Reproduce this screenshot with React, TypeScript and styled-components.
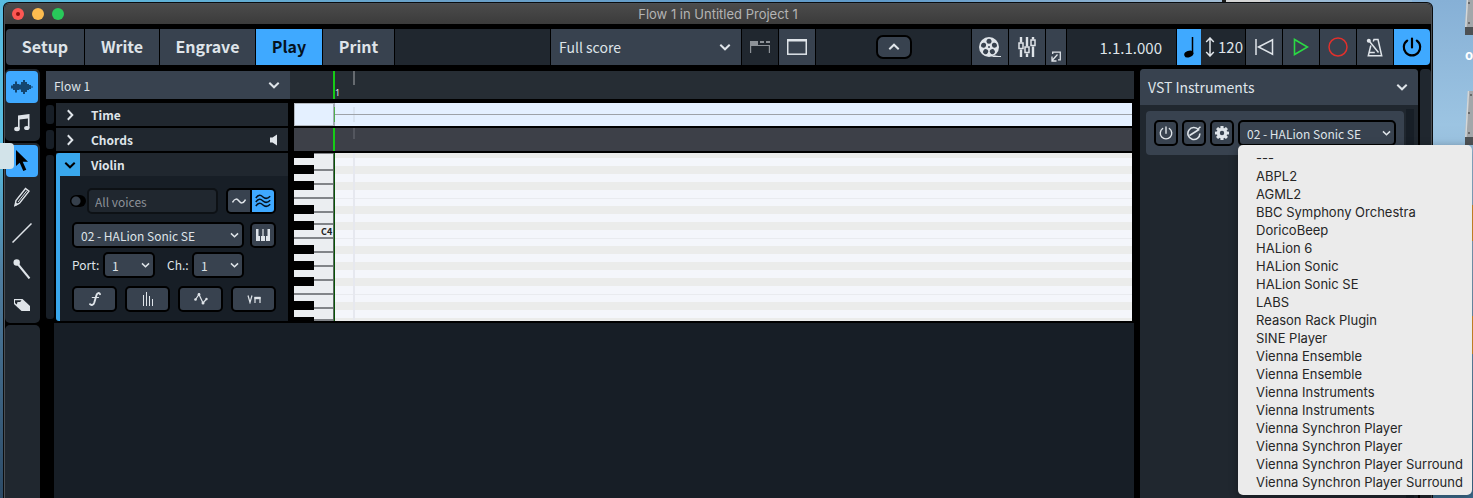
import React from "react";
import styled, { createGlobalStyle, css } from "styled-components";

const c = {
  panel: "#20272f",
  raised: "#38424f",
  deep: "#171e26",
  ruler: "#262d34",
  blue: "#3fa9ff",
  accent: "#39a7ec",
  text: "#dfe4e9",
  muted: "#8c9198",
};
const ui = `"Noto Sans CJK SC", "Noto Sans", sans-serif`;
const system = `Inter, "Liberation Sans", sans-serif`;

const GlobalStyle = createGlobalStyle`
  *, *::before, *::after { box-sizing: border-box; }
  body { margin: 0; background: #5c8fb4; font-family: ${ui}; color: ${c.text}; }
  button, input, select { font-family: inherit; color: inherit; margin: 0; }
  button { cursor: pointer; padding: 0; border: 0; }
  svg { display: block; flex: none; }
`;

const Desktop = styled.div`
  position: relative;
  display: flex;
  flex-direction: column;
  min-height: 100vh;
  padding: 3px 41px 0 4px;
  overflow: hidden;
  background:
    linear-gradient(180deg, transparent 30%, #4f7d9f 55%, #2c4a66 100%) left / 50% 100% no-repeat,
    linear-gradient(90deg, #58bce0 0, #6aa0c8 30%, #5f9aca 60%, #a3bcd2 84%, #8db6d8 100%);
`;

const DesktopItems = styled.svg`
  position: absolute;
  top: 0;
  right: 0;
`;
const DesktopCard = styled.div`
  position: absolute;
  top: 143px;
  left: 0;
  width: 14px;
  height: 26px;
  border-radius: 0 4px 4px 0;
  background: #d2e3e9;
`;

const Window = styled.div`
  position: relative;
  flex: 1;
  display: flex;
  flex-direction: column;
  background: #000;
  border: 1px solid #4b4f54;
  border-bottom: 0;
  border-radius: 5px 5px 0 0;
  box-shadow: 0 0 0 1px #0a0c0e;
`;

const TitleBar = styled.header`
  display: flex;
  align-items: center;
  height: 20px;
  padding: 0 7px;
  border-radius: 4px 4px 0 0;
  background: linear-gradient(#4b4b4b, #3b3b3b);
`;
const Light = styled.button<{ $color: string }>`
  display: grid;
  place-items: center;
  width: 12px;
  height: 12px;
  margin-right: 8px;
  border-radius: 50%;
  background: ${(p) => p.$color};
  &[data-edited]::after {
    content: "";
    width: 4px;
    height: 4px;
    border-radius: 50%;
    background: #8e0f0c;
  }
`;
const Title = styled.h1`
  flex: 1;
  margin: 0 60px 0 0;
  font: 400 13px/20px ${system};
  text-align: center;
  color: #b4b4b4;
`;

const Toolbar = styled.nav`
  display: flex;
  gap: 1px;
  height: 36px;
  margin: 5px 1px 4px 1px;
  border-radius: 4px;
  overflow: hidden;
`;
const Tab = styled.button<{ $w: number; $active?: boolean }>`
  width: ${(p) => p.$w}px;
  font-size: 16px;
  line-height: 34px;
  padding-bottom: 2px;
  font-weight: 700;
  background: ${(p) => (p.$active ? c.blue : c.raised)};
  color: ${(p) => (p.$active ? "#05121f" : c.text)};
`;
const Filler = styled.div`
  flex: 1;
  display: grid;
  place-items: center;
  background: ${c.panel};
`;
const ToolButton = styled.button<{ $w?: number; $tone?: "dark" | "blue" }>`
  display: grid;
  place-items: center;
  width: ${(p) => p.$w ?? 36}px;
  background: ${(p) => (p.$tone === "dark" ? c.panel : p.$tone === "blue" ? c.blue : c.raised)};
  color: ${(p) => (p.$tone === "blue" ? "#000" : c.text)};
`;
const HideButton = styled.button`
  display: grid;
  place-items: center;
  width: 36px;
  height: 24px;
  border: 2px solid #000;
  border-radius: 7px;
  background: ${c.raised};
`;
const Position = styled.output`
  width: 109px;
  padding-right: 14px;
  background: ${c.panel};
  font-size: 15px;
  line-height: 38px;
  text-align: right;
`;
const TempoGroup = styled.div`
  display: flex;
`;
const Tempo = styled.output`
  display: flex;
  align-items: center;
  gap: 3px;
  width: 44px;
  padding-left: 4px;
  background: ${c.panel};
  font-size: 15px;
  line-height: 36px;
`;

const SelectWrap = styled.div<{ $w?: number; $kind?: "bar" | "flow" | "small" }>`
  position: relative;
  display: flex;
  width: ${(p) => (p.$w ? `${p.$w}px` : "auto")};
  flex: ${(p) => (p.$w ? "none" : "1")};
  > svg {
    position: absolute;
    right: ${(p) => (p.$kind === "small" ? 5 : 10)}px;
    top: 50%;
    transform: translateY(-50%);
    pointer-events: none;
  }
`;
const small = css`
  height: 26px;
  padding: 0 0 0 7px;
  border: 2px solid #000;
  border-radius: 5px;
`;
const StyledSelect = styled.select<{ $kind?: "bar" | "flow" | "small" }>`
  appearance: none;
  width: 100%;
  padding: 0 8px;
  border: 0;
  border-radius: 0;
  outline: 0;
  background: ${c.raised};
  font-size: ${(p) => (p.$kind === "bar" ? 14 : 12)}px;
  ${(p) => p.$kind === "small" && small}
`;

const Body = styled.div`
  flex: 1;
  display: flex;
  min-height: 0;
`;
const Sidebar = styled.aside`
  display: flex;
  flex-direction: column;
  gap: 2px;
  width: 35px;
  margin-right: 6px;
`;
const ToolGroup = styled.div<{ $grow?: boolean }>`
  display: flex;
  flex-direction: column;
  gap: 4px;
  padding: 2px 2px 2px 1px;
  border-radius: 5px;
  background: ${c.panel};
  ${(p) => p.$grow && "flex: 1; border-radius: 5px 5px 0 0;"}
`;
const SideTool = styled.button<{ $active?: boolean }>`
  display: grid;
  place-items: center;
  height: 32px;
  border-radius: 4px;
  background: ${(p) => (p.$active ? c.blue : "transparent")};
`;

const Main = styled.main`
  flex: 1;
  min-width: 0;
  display: flex;
  flex-direction: column;
  gap: 2px;
  padding-top: 2px;
`;
const FlowRow = styled.div`
  display: flex;
  height: 28px;
  margin-bottom: 2px;
`;
const Lane = styled.div<{ $bg: string }>`
  flex: 1;
  min-width: 0;
  background: ${(p) => p.$bg};
`;
const Ruler = styled(Lane)`
  padding-left: 4px;
`;
const Track = styled.section`
  display: flex;
  padding-right: 2px;
`;
const Handle = styled.div`
  width: 8px;
  margin: 2px 2px 2px 0;
  border-radius: 3px;
  background: ${c.deep};
`;
const TrackPanel = styled.div`
  width: 232px;
  margin-right: 6px;
`;
const TrackHeader = styled.div`
  display: flex;
  align-items: center;
  height: 23px;
  background: ${c.panel};
`;
const Expander = styled.button<{ $open?: boolean }>`
  display: grid;
  place-items: center;
  width: 24px;
  height: 23px;
  padding-left: 4px;
  border-radius: 3px 0 0 0;
  background: ${(p) => (p.$open ? c.accent : "transparent")};
  color: ${(p) => (p.$open ? "#000" : c.text)};
`;
const TrackName = styled.h2`
  flex: 1;
  margin: 0 0 0 11px;
  font-size: 12px;
  line-height: 22px;
  font-weight: 700;
`;
const Speaker = styled.button`
  margin-right: 10px;
  background: none;
`;
const TrackBody = styled.div`
  display: flex;
  flex-direction: column;
  gap: 8px;
  height: 145px;
  padding: 12px 12px 9px 12px;
  border-left: 4px solid ${c.accent};
  border-radius: 0 0 0 3px;
  background: ${c.deep};
`;
const Row = styled.div<{ $gap?: number }>`
  display: flex;
  align-items: center;
  gap: ${(p) => p.$gap ?? 8}px;
  height: 26px;
`;
const Stack = styled.div`
  display: flex;
  flex-direction: column;
  gap: 4px;
`;
const VoiceSwitch = styled.input`
  appearance: none;
  width: 16px;
  height: 12px;
  margin: 0 1px 0 -2px;
  border-radius: 6px;
  background: radial-gradient(circle at 6px 6px, #36404c 4px, #000 5px);
`;
const VoiceInput = styled.input`
  flex: 1;
  min-width: 0;
  height: 26px;
  padding: 0 6px;
  border: 2px solid #0d1115;
  border-radius: 5px;
  background: ${c.panel};
  font-size: 12px;
  color: ${c.muted};
`;
const Segmented = styled.div`
  display: flex;
  gap: 2px;
  width: 50px;
  height: 26px;
  margin-left: 8px;
  padding: 2px;
  border-radius: 5px;
  background: #000;
`;
const Segment = styled.button<{ $active?: boolean }>`
  flex: 1;
  display: grid;
  place-items: center;
  border-radius: ${(p) => (p.$active ? "0 3px 3px 0" : "3px 0 0 3px")};
  background: ${(p) => (p.$active ? c.blue : c.raised)};
  color: ${(p) => (p.$active ? "#05121f" : c.text)};
`;
const BoxButton = styled.button<{ $w?: number }>`
  display: grid;
  place-items: center;
  width: ${(p) => (p.$w ? `${p.$w}px` : "auto")};
  flex: ${(p) => (p.$w ? "none" : "1")};
  height: 26px;
  border: 2px solid #000;
  border-radius: 5px;
  background: ${c.raised};
`;
const FieldLabel = styled.label<{ $w: number; $indent?: number }>`
  width: ${(p) => p.$w}px;
  padding-left: ${(p) => p.$indent ?? 0}px;
  font-size: 12px;
  line-height: 26px;
  white-space: nowrap;
`;
const Empty = styled.div`
  flex: 1;
  margin-left: 8px;
  background: ${c.deep};
`;

const Instruments = styled.aside`
  display: flex;
  flex-direction: column;
  width: 278px;
  margin: 0 2px 0 6px;
  border-radius: 4px 4px 0 0;
  background: ${c.panel};
`;
const PanelTitle = styled.button`
  display: flex;
  align-items: center;
  justify-content: space-between;
  height: 36px;
  padding: 0 10px 0 8px;
  border-radius: 4px 4px 0 0;
  background: ${c.raised};
  font-size: 14px;
  line-height: 36px;
`;
const PanelBody = styled.div`
  flex: 1;
  display: flex;
  align-items: stretch;
  gap: 2px;
  padding: 4px 4px 0 6px;
`;
const Card = styled.div`
  flex: 1;
  align-self: flex-start;
  display: flex;
  align-items: center;
  gap: 4px;
  height: 44px;
  margin-top: 2px;
  padding: 0 8px;
  border-radius: 4px;
  background: ${c.raised};
`;
const ScrollTrack = styled.div`
  width: 8px;
  background: ${c.deep};
`;
const EdgeStrip = styled.div`
  width: 11px;
  border-radius: 4px 4px 0 0;
  background: ${c.panel};
`;
const Menu = styled.ul`
  position: absolute;
  z-index: 2;
  top: 25px;
  left: 0;
  width: 234px;
  margin: 0;
  padding: 4px 0;
  list-style: none;
  border-radius: 5px;
  background: #ebebeb;
  box-shadow: 0 2px 8px rgba(0, 0, 0, 0.35);
`;
const MenuItem = styled.li`
  padding-left: 18px;
  font: 400 13px/18px ${system};
  color: #262626;
  white-space: nowrap;
`;

const Chevron = ({ w = 12, dir = "down" }: { w?: number; dir?: "down" | "up" | "right" }) => (
  <svg
    width={w}
    height={w}
    viewBox="0 0 12 12"
    fill="none"
    stroke="currentColor"
    strokeWidth="2"
    transform={dir === "up" ? "rotate(180)" : dir === "right" ? "rotate(-90)" : undefined}
  >
    <path d="M1.3 3.8 6 8.3l4.7-4.5" />
  </svg>
);

const Icon = ({ w, h = w, children }: { w: number; h?: number; children: React.ReactNode }) => (
  <svg width={w} height={h} viewBox={`0 0 ${w} ${h}`} fill="none" stroke="currentColor" strokeWidth="1.5">
    {children}
  </svg>
);

const PowerIcon = ({ w = 20, sw = 2.2 }: { w?: number; sw?: number }) => (
  <svg width={w} height={w} viewBox="0 0 20 20" fill="none" stroke="currentColor" strokeWidth={sw} strokeLinecap="round">
    <path d="M10 1.5v9M5.2 3.6a8.2 8.2 0 1 0 9.6 0" />
  </svg>
);

const GearIcon = () => (
  <svg width="16" height="16" viewBox="-8 -8 16 16" fill="currentColor">
    {[0, 45, 90, 135, 180, 225, 270, 315].map((a) => (
      <rect key={a} x="-1.6" y="-7" width="3.2" height="4" rx=".6" transform={`rotate(${a})`} />
    ))}
    <circle r="3.7" fill="none" stroke="currentColor" strokeWidth="3" />
  </svg>
);

const reelHoles = [0, 72, 144, 216, 288];
const FilmIcon = () => (
  <svg width="24" height="22" viewBox="0 0 24 22" fill="currentColor">
    <circle cx="11" cy="11" r="10" />
    <path d="M11 21c3 0 4-.8 5.500-1.800 1 .6 3 .7 6.500.7V21Z" />
    <g fill={c.raised}>
      {reelHoles.map((a) => (
        <circle key={a} cx="11" cy="5.300" r="2.500" transform={`rotate(${a} 11 11)`} />
      ))}
      <circle cx="11" cy="11" r="1" />
    </g>
  </svg>
);

const MixerIcon = () => (
  <Icon w={18} h={22}>
    <path strokeWidth="2.4" d="M3 1v5.5M3 13.5V21M9 1v9.5M9 17.5V21M15 1v2.500M15 10.5V21" />
    <rect x="1" y="7" width="4" height="5.5" />
    <rect x="7" y="11" width="4" height="5.5" />
    <rect x="13" y="4" width="4" height="5.5" />
  </Icon>
);

const semitone = 8;
/* Tops of the black-key rows, measured from the top of the roll. */
const blackRows = [-3, 13, 29, 53, 69, 93, 109, 125, 149, 165];
const whiteEdges = [0, 17, 31, 45, 59, 71, 85, 99, 113, 127, 141, 155, 167];

const PianoRoll = () => (
  <svg width="100%" height="168">
    <rect width="100%" height="168" fill="#f4f6fb" />
    {blackRows.map((y) => (
      <rect key={y} x="41" y={y} width="100%" height={semitone} fill="#ebeceb" />
    ))}
    {[45, 85, 141].map((y) => (
      <rect key={y} x="41" y={y} width="100%" height="1" fill="#e9ebef" />
    ))}
    <rect width="40" height="168" fill="#ebeef1" />
    {whiteEdges.map((y) => (
      <rect key={y} y={y - 1} width="40" height="2" fill="#818488" />
    ))}
    {blackRows.map((y) => (
      <rect key={y} y={y - 1} width="20" height="9" fill="#000" />
    ))}
    <rect x="59" width="2" height="168" fill="#e6e8ef" />
    <rect x="39" width="1" height="168" fill="#5b6a5e" />
    <rect x="40" width="1" height="168" fill="#075307" />
    <text x="27" y="82" fontSize="9" fontWeight="700" fill="#222">
      C4
    </text>
  </svg>
);

const RulerMarks = () => (
  <svg width="100%" height="28">
    <rect x="39" width="2" height="28" fill="#16cc16" />
    <rect x="59" width="2" height="14" fill="#666b70" />
    <text x="41" y="25" fontSize="9" fontFamily="Noto Sans, sans-serif" fill="#dfe4e9">
      1
    </text>
  </svg>
);

const TimeLane = () => (
  <svg width="100%" height="23">
    <rect x="59" y="4" width="2" height="15" fill="#d9e4f1" />
    <rect x="40" y="11" width="100%" height="1" fill="#9da2a8" />
    <rect x="39" width="2" height="23" fill="#a5adb6" />
    <rect x="40" y="4" width="1" height="15" fill="#4caf4c" />
    <path d="M0 .5h40M0 22.5h40M.5 0v23" stroke="#b3b9c0" />
  </svg>
);

const ChordLane = () => (
  <svg width="100%" height="23">
    <rect x="39" width="2" height="23" fill="#16cc16" />
    <rect x="59" width="2" height="11" fill="#53565e" />
  </svg>
);

type SelectProps = {
  label: string;
  value: string;
  w?: number;
  kind?: "bar" | "flow" | "small";
  id?: string;
  children?: React.ReactNode;
};
const Select = ({ label, value, w, kind = "bar", id, children }: SelectProps) => (
  <SelectWrap $w={w} $kind={kind}>
    <StyledSelect id={id} aria-label={label} $kind={kind} defaultValue={value}>
      <option>{value}</option>
    </StyledSelect>
    <Chevron w={kind === "small" ? 9 : 12} />
    {children}
  </SelectWrap>
);

const tabs: [string, number][] = [
  ["Setup", 78],
  ["Write", 74],
  ["Engrave", 95],
  ["Play", 66],
  ["Print", 71],
];

const instruments = [
  "---",
  "ABPL2",
  "AGML2",
  "BBC Symphony Orchestra",
  "DoricoBeep",
  "HALion 6",
  "HALion Sonic",
  "HALion Sonic SE",
  "LABS",
  "Reason Rack Plugin",
  "SINE Player",
  "Vienna Ensemble",
  "Vienna Ensemble",
  "Vienna Instruments",
  "Vienna Instruments",
  "Vienna Synchron Player",
  "Vienna Synchron Player",
  "Vienna Synchron Player Surround",
  "Vienna Synchron Player Surround",
];

const Drive = ({ y }: { y: number }) => (
  <g transform={`translate(243 ${y})`}>
    <path d="M3 0h40v46H0Z" fill="#a3a7aa" />
    <path d="M0 46h45v8H0Z" fill="#4d5154" />
    <path d="M3.500 0 .8 46" stroke="#d3d7d9" strokeWidth="1.500" />
    <circle cx="6" cy="4" r="1" fill="#555" />
    <circle cx="4" cy="22" r="1" fill="#555" />
    <circle cx="4" cy="42" r="1" fill="#555" />
  </g>
);

export default function App() {
  return (
    <Desktop>
      <GlobalStyle />
      <DesktopItems width="251" height="498">
        <defs>
          <linearGradient id="sky" x1="0" y1="0" x2="0" y2="1">
            <stop offset="0" stopColor="#86b0d6" />
            <stop offset=".25" stopColor="#9cc4e2" />
            <stop offset=".5" stopColor="#86a9c4" />
            <stop offset="1" stopColor="#3d6c8e" />
          </linearGradient>
        </defs>
        <rect x="190" width="61" height="498" fill="url(#sky)" />
        <rect x="4" width="44" height="3" fill="#d5d5d5" />
        <rect width="4" height="3" fill="#1b1b1b" />
        <Drive y={-19} />
        <Drive y={91} />
        <text x="243" y="60" fontSize="13" fontWeight="700" fill="#fff">
          o
        </text>
        <rect x="250" y="205" width="1" height="36" fill="#e0952b" />
        <rect x="250" y="316" width="1" height="38" fill="#e0952b" />
      </DesktopItems>

      <Window>
        <TitleBar>
          <Light $color="#fc5753" data-edited aria-label="Close" />
          <Light $color="#fdbc4f" aria-label="Minimise" />
          <Light $color="#28c95a" aria-label="Zoom" />
          <Title>Flow 1 in Untitled Project 1</Title>
        </TitleBar>

        <Toolbar>
          {tabs.map(([name, width]) => (
            <Tab key={name} $w={width} $active={name === "Play"}>
              {name}
            </Tab>
          ))}
          <Filler />
          <Select label="Layout" value="Full score" w={190} />
          <ToolButton $tone="dark" aria-label="Show tabs">
            <svg width="20" height="12" viewBox="0 0 20 12" fill="#8d9298">
              <path d="M0 0h8v4h12v8h-1.200V5H1.200v7H0ZM10 0h4v2h-4ZM16 0h4v2h-4Z" />
            </svg>
          </ToolButton>
          <ToolButton aria-label="Show panels">
            <Icon w={20} h={16}>
              <rect x=".75" y="1" width="18.5" height="14.2" />
              <path d="M0 1.200h20" strokeWidth="2.400" />
            </Icon>
          </ToolButton>
          <Filler>
            <HideButton aria-label="Hide toolbar">
              <Chevron dir="up" />
            </HideButton>
          </Filler>
          <ToolButton aria-label="Video">
            <FilmIcon />
          </ToolButton>
          <ToolButton aria-label="Mixer">
            <MixerIcon />
          </ToolButton>
          <ToolButton $w={20} aria-label="Transport window">
            <svg width="10" height="30" viewBox="0 0 10 30" fill="none" stroke="currentColor" strokeWidth="1.3">
              <path d="M1.700 22v-1.800h7.600v7.600H7M6.500 22.500l-5 5.500M1 24.500V29h4.500" />
            </svg>
          </ToolButton>
          <Position>1.1.1.000</Position>
          <TempoGroup>
            <ToolButton $w={24} $tone="blue" aria-label="Fixed tempo">
              <svg width="10" height="22" viewBox="0 0 10 22">
                <path d="M8.500 1v17" stroke="#000" strokeWidth="1.5" />
                <ellipse cx="4.800" cy="18" rx="4.700" ry="3.200" transform="rotate(-22 4.800 18)" />
              </svg>
            </ToolButton>
            <Tempo>
              <Icon w={10} h={20}>
                <path d="M5 1v18M1.200 5 5 1l3.800 4M1.200 15 5 19l3.800-4" />
              </Icon>
              120
            </Tempo>
          </TempoGroup>
          <ToolButton aria-label="Rewind">
            <Icon w={20} h={18}>
              <path d="M2 1v16M4.500 9 18.500 1.800v14.400Z" />
            </Icon>
          </ToolButton>
          <ToolButton aria-label="Play">
            <svg width="16" height="18" viewBox="0 0 16 18" fill="none" stroke="#2bd944" strokeWidth="1.6">
              <path d="M1.500 1.500v15L14.500 9Z" />
            </svg>
          </ToolButton>
          <ToolButton aria-label="Record">
            <svg width="20" height="20" viewBox="0 0 20 20" fill="none" stroke="#e0302c" strokeWidth="1.5">
              <circle cx="10" cy="10" r="9" />
            </svg>
          </ToolButton>
          <ToolButton aria-label="Click">
            <Icon w={18} h={19}>
              <path d="M4.800 7.500 2.300 17.800h13.400L12 1.500H8L7.300 3.500M3 2.800 12.500 14.500M2.800 14.500h6" />
              <circle cx="2.800" cy="2.800" r="2" fill="currentColor" stroke="none" />
            </Icon>
          </ToolButton>
          <ToolButton $tone="blue" aria-label="Activate project">
            <PowerIcon />
          </ToolButton>
        </Toolbar>

        <Body>
          <Sidebar>
            <ToolGroup>
              <SideTool $active aria-label="Track inspector">
                <svg width="22" height="14" viewBox="0 0 22 14" stroke="#0d3558" strokeWidth="1.7">
                  <path d="M1 5.500v3M3 4v6M5 1.500v11M7 4v6M9 4.500v5M11 2v10M13 0v14M15 2v10M17 4v6M19 5v4M21 6.500v1" />
                </svg>
              </SideTool>
              <SideTool aria-label="Notes">
                <svg width="16" height="18" viewBox="0 0 16 18" fill="currentColor">
                  <path d="M4 1.500 15.500 0v14h-1.600V4.500L5.600 5.600V15H4Z" />
                  <ellipse cx="3" cy="15" rx="2.800" ry="2.200" />
                  <ellipse cx="12.800" cy="14" rx="2.700" ry="2.100" />
                </svg>
              </SideTool>
            </ToolGroup>
            <ToolGroup>
              <SideTool $active aria-label="Select">
                <svg width="14" height="22" viewBox="0 0 14 22">
                  <path d="M1 0v16l3.700-3.200L8.300 21l3-1.300-3.600-8H13Z" />
                </svg>
              </SideTool>
              <SideTool aria-label="Draw">
                <Icon w={18} h={20}>
                  <path d="M2 18.500 3 13.500 12.500 1.500l3.500 2.700L6.500 16.200Z" strokeWidth="1.4" />
                  <path d="M14 3.500 5 15" strokeWidth="1" />
                  <path d="m1.300 19.500 1.200-4.200L5.500 17.500Z" fill="currentColor" stroke="none" />
                </Icon>
              </SideTool>
              <SideTool aria-label="Line">
                <Icon w={20}>
                  <path d="M.5 19.500l19-19" />
                </Icon>
              </SideTool>
              <SideTool aria-label="Percussion">
                <Icon w={18} h={20}>
                  <path d="m3.500 3.500 13 16" strokeWidth="2" />
                  <circle cx="3.700" cy="3.500" r="3.200" fill="currentColor" stroke="none" />
                </Icon>
              </SideTool>
              <SideTool aria-label="Erase">
                <svg width="18" height="14" viewBox="0 0 18 14">
                  <path d="M1 1h8.500l7.500 7v5H8.500L1 6Z" fill="currentColor" />
                  <path d="M2 2.200h6.500L7.200 4H4.500L3.800 6.500 2 5Z" fill={c.panel} />
                </svg>
              </SideTool>
            </ToolGroup>
            <ToolGroup $grow />
          </Sidebar>

          <Main>
            <FlowRow>
              <Select label="Flow" value="Flow 1" w={244} kind="flow" />
              <Ruler $bg={c.ruler}>
                <RulerMarks />
              </Ruler>
            </FlowRow>

            <Track>
              <Handle />
              <TrackPanel>
                <TrackHeader>
                  <Expander aria-label="Expand Time">
                    <Chevron dir="right" />
                  </Expander>
                  <TrackName>Time</TrackName>
                </TrackHeader>
              </TrackPanel>
              <Lane $bg="#e4f0ff">
                <TimeLane />
              </Lane>
            </Track>

            <Track>
              <Handle />
              <TrackPanel>
                <TrackHeader>
                  <Expander aria-label="Expand Chords">
                    <Chevron dir="right" />
                  </Expander>
                  <TrackName>Chords</TrackName>
                  <Speaker aria-label="Enable playback">
                    <svg width="9" height="12" viewBox="0 0 9 12" fill="currentColor">
                      <path d="M1 3.500h2.500L8 .5v11L3.500 8.500H1Z" />
                    </svg>
                  </Speaker>
                </TrackHeader>
              </TrackPanel>
              <Lane $bg="#3d4048">
                <ChordLane />
              </Lane>
            </Track>

            <Track>
              <Handle />
              <TrackPanel>
                <TrackHeader>
                  <Expander $open aria-label="Collapse Violin">
                    <Chevron />
                  </Expander>
                  <TrackName>Violin</TrackName>
                </TrackHeader>
                <TrackBody>
                  <Row $gap={0}>
                    <VoiceSwitch type="checkbox" aria-label="Independent voice playback" />
                    <VoiceInput aria-label="Voice" defaultValue="All voices" readOnly />
                    <Segmented>
                      <Segment aria-label="Single voice">
                        <Icon w={14} h={8}>
                          <path d="M.5 5.500C3 1 5 1.500 7 4s4 3 6.500-1.500" />
                        </Icon>
                      </Segment>
                      <Segment $active aria-label="All voices">
                        <Icon w={16} h={14}>
                          <path d="M.8 4c2.700-3.500 4.700-3.300 7.200-1s4.500 2 7.200-.8M.8 8c2.700-3.500 4.700-3.300 7.200-1s4.500 2 7.200-.8M.8 12c2.700-3.500 4.700-3.300 7.200-1s4.500 2 7.200-.8" />
                        </Icon>
                      </Segment>
                    </Segmented>
                  </Row>
                  <Stack>
                    <Row $gap={6}>
                      <Select label="Instrument" value="02 - HALion Sonic SE" kind="small" />
                      <BoxButton $w={26} aria-label="Edit instrument">
                        <svg width="14" height="12" viewBox="0 0 14 12" fill="currentColor">
                          <path d="M0 0h2.500v7H4v5H0ZM5 12V7h1.400V0h1.200v7H9v5ZM10 12V7h1.500V0H14v12Z" />
                        </svg>
                      </BoxButton>
                    </Row>
                    <Row $gap={0}>
                      <FieldLabel $w={31} htmlFor="port">
                        Port:
                      </FieldLabel>
                      <Select id="port" label="Port" value="1" w={52} kind="small" />
                      <FieldLabel $w={37} $indent={12} htmlFor="channel">
                        Ch.:
                      </FieldLabel>
                      <Select id="channel" label="Channel" value="1" w={52} kind="small" />
                    </Row>
                  </Stack>
                  <Row>
                    <BoxButton aria-label="Dynamics">
                      <svg width="12" height="14" viewBox="0 0 12 14" fill="none" stroke="currentColor" strokeLinecap="round">
                        <path d="M11 2.200C10.300.5 8.300.7 7.500 3L5.300 10.500C4.500 13 2.300 13.700 1 12.200" strokeWidth="1.9" />
                        <path d="M3.300 5.500h6.200" strokeWidth="1.2" />
                      </svg>
                    </BoxButton>
                    <BoxButton aria-label="Velocity">
                      <Icon w={12} h={14}>
                        <path d="M1.500 3v11M4.500 0v14M7.500 4v10M10.500 7v7" strokeWidth="1" />
                      </Icon>
                    </BoxButton>
                    <BoxButton aria-label="Automation">
                      <Icon w={14} h={14}>
                        <path d="M1.500 7.500 5 2.500 9 11l3.500-4" strokeWidth="1.2" />
                        <g fill="currentColor" stroke="none">
                          <circle cx="1.500" cy="7.500" r="1.300" />
                          <circle cx="5" cy="2.500" r="1.400" />
                          <circle cx="9" cy="11" r="1.500" />
                          <circle cx="12.500" cy="7" r="1.200" />
                        </g>
                      </Icon>
                    </BoxButton>
                    <BoxButton aria-label="Playing techniques">
                      <Icon w={14} h={9}>
                        <path d="m1 .5 2 7 2-7" strokeWidth="1.2" />
                        <path d="M8 8V2.500h5V8" strokeWidth="1.2" />
                        <path d="M7.500 3h6" strokeWidth="2.4" />
                      </Icon>
                    </BoxButton>
                  </Row>
                </TrackBody>
              </TrackPanel>
              <Lane $bg="#f4f6fb">
                <PianoRoll />
              </Lane>
            </Track>
            <Empty />
          </Main>

          <Instruments>
            <PanelTitle>
              VST Instruments
              <Chevron />
            </PanelTitle>
            <PanelBody>
              <Card>
                <BoxButton $w={24} aria-label="Enable instrument">
                  <PowerIcon w={14} sw={2} />
                </BoxButton>
                <BoxButton $w={24} aria-label="Edit channel">
                  <Icon w={16}>
                    <path d="M3.500 10.500 12.600 4.800A6 6 0 1 0 13.900 8.500" strokeWidth="1.6" />
                    <path d="M11.500 4.500 14.500 1.800" strokeWidth="1.4" />
                  </Icon>
                </BoxButton>
                <BoxButton $w={24} aria-label="Instrument settings">
                  <GearIcon />
                </BoxButton>
                <Select label="VST instrument" value="02 - HALion Sonic SE" w={158} kind="small">
                  <Menu>
                    {instruments.map((name, i) => (
                      <MenuItem key={i}>{name}</MenuItem>
                    ))}
                  </Menu>
                </Select>
              </Card>
              <ScrollTrack />
            </PanelBody>
          </Instruments>
          <EdgeStrip />
        </Body>
      </Window>
      <DesktopCard />
    </Desktop>
  );
}
